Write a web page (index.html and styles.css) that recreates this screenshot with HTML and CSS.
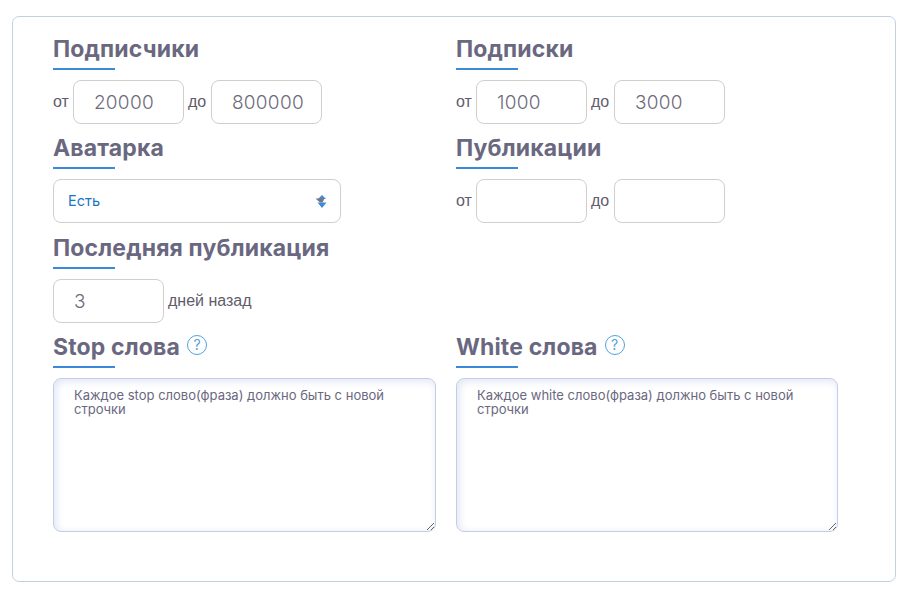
FILE: index.html
```html
<!DOCTYPE html>
<html lang="ru">
<head>
<meta charset="utf-8">
<title>Фильтры</title>
<link rel="stylesheet" href="styles.css">
</head>
<body>
<form class="card">
  <section class="field">
    <h2 class="title">Подписчики</h2>
    <div class="controls">
      <label class="unit">от</label><input class="box" value="20000">
      <label class="unit to">до</label><input class="box" value="800000">
    </div>
  </section>
  <section class="field">
    <h2 class="title">Подписки</h2>
    <div class="controls">
      <label class="unit">от</label><input class="box" value="1000">
      <label class="unit to">до</label><input class="box" value="3000">
    </div>
  </section>
  <section class="field tall">
    <h2 class="title">Аватарка</h2>
    <div class="controls">
      <div class="select-wrap">
        <select class="select"><option>Есть</option><option>Нет</option></select>
        <svg class="select-arrows" viewBox="0 0 12 13" width="12" height="13" aria-hidden="true">
          <path d="M7 0 11 4H3Z" fill="#3d8bd8"/>
          <path d="M2.5 7.5H11.5L7 13Z" fill="#3d8bd8"/>
          <path d="M.5 3.4H9.5L7.5 7.5H5Z" fill="#77777f"/>
        </svg>
      </div>
    </div>
  </section>
  <section class="field tall">
    <h2 class="title">Публикации</h2>
    <div class="controls">
      <label class="unit">от</label><input class="box">
      <label class="unit to">до</label><input class="box">
    </div>
  </section>
  <section class="field wide">
    <h2 class="title">Последняя публикация</h2>
    <div class="controls">
      <input class="box" value="3">
      <label class="unit">дней назад</label>
    </div>
  </section>
  <section class="field words-field">
    <h2 class="title">Stop слова <span class="help">?</span></h2>
    <textarea class="words" placeholder="Каждое stop слово(фраза) должно быть с новой строчки"></textarea>
  </section>
  <section class="field words-field">
    <h2 class="title">White слова <span class="help">?</span></h2>
    <textarea class="words" placeholder="Каждое white слово(фраза) должно быть с новой строчки"></textarea>
  </section>
</form>
</body>
</html>
```

FILE: styles.css
```css
* { box-sizing: border-box; }
html, body { margin: 0; background: #fff; }
body { padding: 16px 8px 8px 12px; font-family: "Inter", "Liberation Sans", sans-serif; }
.card {
  width: 884px;
  height: 566px;
  border: 1px solid #c3d0e4;
  border-radius: 7px;
  padding: 20px 40px 0;
  display: grid;
  grid-template-columns: 383px 382px;
  column-gap: 20px;
  grid-auto-rows: min-content;
  align-content: start;
}
.field { height: 99px; }
.tall { height: 100px; }
.wide { grid-column: 1 / -1; }
.words-field { height: auto; }
.title {
  margin: 0 0 10px;
  height: 33px;
  position: relative;
  font: 700 23px/25px "Inter", sans-serif;
  letter-spacing: .15px;
  color: #6a6880;
  display: flex;
  align-items: flex-start;
  gap: 7px;
}
.title::after {
  content: "";
  position: absolute;
  left: 0;
  bottom: 0;
  width: 62px;
  height: 2px;
  background: #3b8ad9;
}
.controls { display: flex; align-items: center; gap: 4px; }
.unit { font: 16px/20px "Liberation Sans", sans-serif; color: #5f5d6c; }
.to { min-width: 19px; }
.box {
  width: 111px;
  height: 44px;
  border: 1px solid #cfcfcf;
  border-radius: 8px;
  padding: 0 10px 0 20px;
  background: #fff;
  font: 300 19px "Inter", sans-serif;
  letter-spacing: .3px;
  color: #6e6c7c;
  outline: none;
}
.select-wrap { position: relative; width: 288px; }
.select {
  display: block;
  width: 100%;
  height: 44px;
  appearance: none;
  border: 1px solid #cfcfcf;
  border-radius: 8px;
  padding: 0 14px 2px;
  background: #fff;
  font: 14.5px "Inter", sans-serif;
  color: #1a76c4;
}
.select-arrows { position: absolute; right: 14px; top: 16px; pointer-events: none; }
.help {
  width: 20px;
  height: 20px;
  border: 1px solid #4fa3da;
  border-radius: 50%;
  font: 400 14px/18px "Inter", sans-serif;
  letter-spacing: 0;
  color: #4fa3da;
  text-align: center;
}
.words {
  display: block;
  width: 100%;
  height: 154px;
  border: 1px solid #c3cee2;
  border-radius: 8px;
  padding: 9px 20px;
  background: #fff;
  box-shadow: inset 2px 2px 8px #dfe4f4;
  font: 13px/14px "Inter", sans-serif;
  color: #6a6880;
  outline: none;
}
.words::placeholder { color: #6a6880; opacity: 1; }
```
